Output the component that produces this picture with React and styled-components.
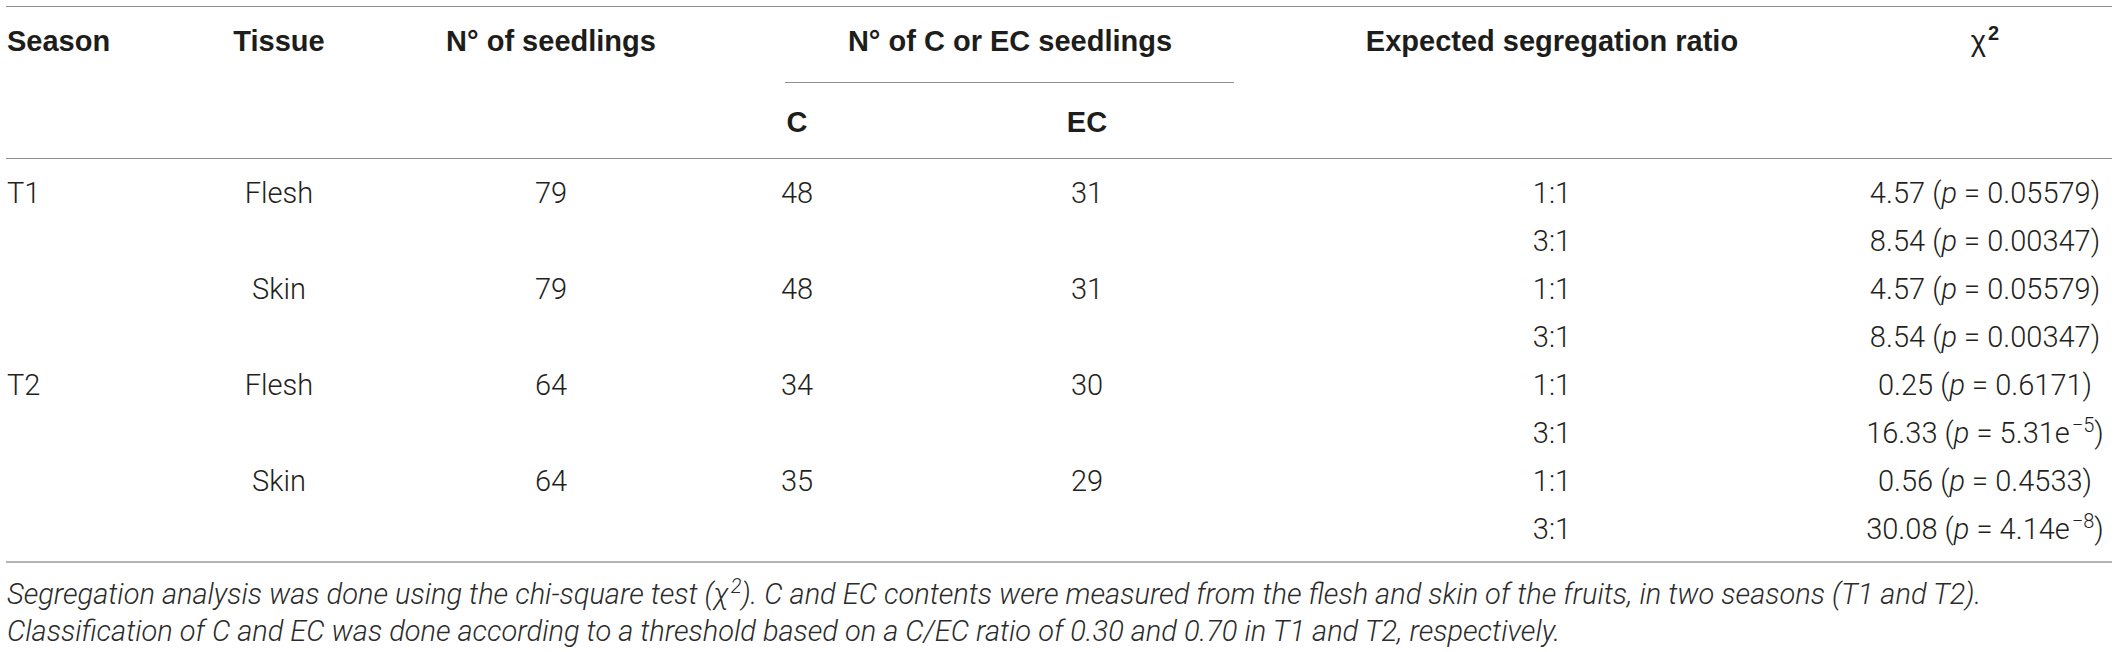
import styled, { createGlobalStyle } from "styled-components";

const GlobalStyle = createGlobalStyle`
  html, body {
    margin: 0;
    padding: 0;
    background: #ffffff;
  }
  body {
    font-family: Roboto, "Liberation Sans", Arial, sans-serif;
    color: #231f20;
  }
`;

const COLS = "170px 206px 338px 154px 426px 504px 308px";

// per column alignment, the last column is pushed in so its center lands under the chi header
const columns = [
  { align: "left", inset: 1 },
  {},
  {},
  {},
  {},
  {},
  { inset: 54 },
];

const rows = [
  { season: "T1", tissue: "Flesh", total: "79", c: "48", ec: "31", ratio: "1:1", chi: "4.57", p: "0.05579" },
  { ratio: "3:1", chi: "8.54", p: "0.00347" },
  { tissue: "Skin", total: "79", c: "48", ec: "31", ratio: "1:1", chi: "4.57", p: "0.05579" },
  { ratio: "3:1", chi: "8.54", p: "0.00347" },
  { season: "T2", tissue: "Flesh", total: "64", c: "34", ec: "30", ratio: "1:1", chi: "0.25", p: "0.6171" },
  { ratio: "3:1", chi: "16.33", p: "5.31e", exp: "−5" },
  { tissue: "Skin", total: "64", c: "35", ec: "29", ratio: "1:1", chi: "0.56", p: "0.4533" },
  { ratio: "3:1", chi: "30.08", p: "4.14e", exp: "−8" },
];

export default function App() {
  return (
    <>
      <GlobalStyle />
      <Table>
        <HeadGrid>
          <HeadCell $col={1} {...alignOf(0)}>Season</HeadCell>
          <HeadCell $col={2}>Tissue</HeadCell>
          <HeadCell $col={3}>N° of seedlings</HeadCell>
          <SpanHead>
            <span>N° of C or EC seedlings</span>
            <Rule />
          </SpanHead>
          <HeadCell $col={6}>Expected segregation ratio</HeadCell>
          <HeadCell $col={7} {...alignOf(6)}>
            <Chi>χ</Chi>
            <Sup $bold>2</Sup>
          </HeadCell>
          <SubHead $col={4}>C</SubHead>
          <SubHead $col={5}>EC</SubHead>
        </HeadGrid>

        <Body>
          {rows.map((r, i) => (
            <Row key={i}>
              <Cell {...alignOf(0)}>{r.season}</Cell>
              <Cell>{r.tissue}</Cell>
              <Cell>{r.total}</Cell>
              <Cell>{r.c}</Cell>
              <Cell>{r.ec}</Cell>
              <Cell>{r.ratio}</Cell>
              <Cell {...alignOf(6)}>
                {r.chi} (<Em>p</Em> = {r.p}
                {r.exp && <Sup>{r.exp}</Sup>})
              </Cell>
            </Row>
          ))}
        </Body>

        <Footnote>
          <Line>
            Segregation analysis was done using the chi-square test (χ<Sup>2</Sup>). C and EC
            contents were measured from the flesh and skin of the fruits, in two seasons (T1 and
            T2).
          </Line>
          <Line>
            Classification of C and EC was done according to a threshold based on a C/EC ratio of
            0.30 and 0.70 in T1 and T2, respectively.
          </Line>
        </Footnote>
      </Table>
    </>
  );
}

function alignOf(i) {
  return { $align: columns[i].align, $inset: columns[i].inset };
}

const Table = styled.div`
  width: 2106px;
  margin: 6px 0 0 6px;
  border-top: 1px solid #8f8f8f;
`;

const Cell = styled.div`
  text-align: ${(p) => p.$align || "center"};
  padding-left: ${(p) => p.$inset || 0}px;
  white-space: nowrap;
  font-size: 29px;
  line-height: 34px;
  font-weight: 300;
`;

const HeadGrid = styled.div`
  display: grid;
  grid-template-columns: ${COLS};
  grid-template-rows: auto auto;
  border-bottom: 1px solid #8f8f8f;
`;

const HeadCell = styled(Cell)`
  grid-column: ${(p) => p.$col};
  grid-row: 1 / span 2;
  padding-top: 17px;
  font-family: "Liberation Sans", Arial, sans-serif;
  font-weight: 700;
  color: #1d1d1b;
`;

const SpanHead = styled(Cell)`
  grid-column: 4 / span 2;
  grid-row: 1;
  padding-top: 17px;
  font-family: "Liberation Sans", Arial, sans-serif;
  font-weight: 700;
  color: #1d1d1b;
`;

const Rule = styled.div`
  height: 1px;
  background: #8f8f8f;
  margin: 24px 66px 0 65px;
`;

const SubHead = styled(Cell)`
  grid-column: ${(p) => p.$col};
  grid-row: 2;
  padding: 22px 0 19px;
  font-family: "Liberation Sans", Arial, sans-serif;
  font-weight: 700;
  color: #1d1d1b;
`;

const Chi = styled.span`
  font-weight: 400;
`;

const Sup = styled.sup`
  font-size: 20px;
  line-height: 0;
  vertical-align: 11px;
  font-weight: ${(p) => (p.$bold ? 700 : "inherit")};
  margin-left: 2px;
`;

const Em = styled.i`
  font-style: italic;
`;

const Body = styled.div`
  padding: 10px 0 8px;
`;

const Row = styled.div`
  display: grid;
  grid-template-columns: ${COLS};
  padding: 7px 0;
  color: #231f20;
`;

const Footnote = styled.div`
  border-top: 2px solid #b4b4b4;
  padding-top: 13px;
`;

const Line = styled.div`
  font-size: 29px;
  line-height: 37px;
  font-weight: 300;
  font-style: italic;
  white-space: nowrap;
  padding-left: 1px;
  color: #2b2b2b;
`;
